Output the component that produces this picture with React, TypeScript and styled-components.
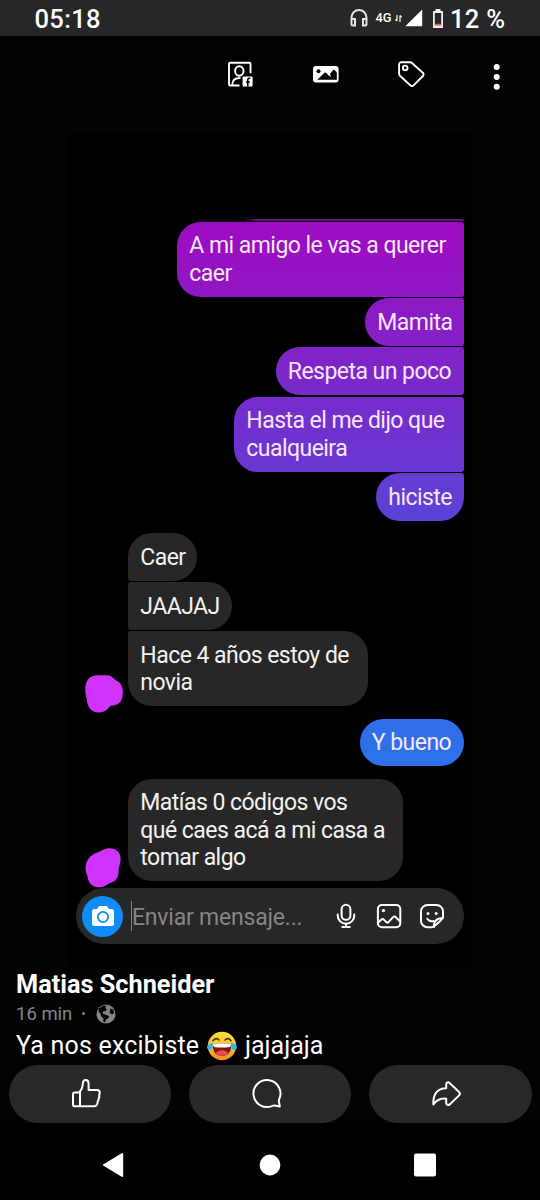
import React from "react";
import styled, { createGlobalStyle } from "styled-components";

const GlobalStyle = createGlobalStyle`
  * { box-sizing: border-box; }
  body { margin: 0; background: #000; }
  svg { display: block; flex: none; }
`;

const Screen = styled.main`
  width: 540px;
  height: 1200px;
  display: flex;
  flex-direction: column;
  background: #030303;
  color: #fff;
  font-family: Roboto, "Liberation Sans", sans-serif;
  overflow: hidden;
`;

const StatusBar = styled.header`
  height: 36px;
  flex: none;
  display: flex;
  align-items: center;
  padding: 0 35px 0 34.5px;
  background: #262729;
`;

const Clock = styled.span`
  font-size: 25.5px;
  font-weight: 500;
  line-height: 36px;
  letter-spacing: 0.35px;
  margin-right: auto;
  padding-top: 2px;
`;

const Network = styled.span`
  font-size: 12.8px;
  font-weight: 500;
  line-height: 36px;
  margin-left: 8px;
  width: 19.5px;
  white-space: nowrap;
`;

const Battery = styled(Clock)`
  margin: 0 0 0 6px;
  width: 55px;
  white-space: nowrap;
`;

const Toolbar = styled.nav`
  height: 98px;
  flex: none;
  display: flex;
  align-items: flex-start;
  padding: 23px 29px 0 226px;
`;

const ToolButton = styled.div<{ $width: number }>`
  width: ${(p) => p.$width}px;
  height: 32px;
  flex: none;
`;

const Photo = styled.section`
  width: 406px;
  height: 832px;
  flex: none;
  margin-left: 67px;
  padding: 85px 9px 0;
  display: flex;
  flex-direction: column;
  background: #000;
`;

const PreviousBubble = styled.div`
  width: 220px;
  height: 1.5px;
  flex: none;
  align-self: flex-end;
  margin-bottom: 1px;
  background: linear-gradient(90deg, transparent, #6f0c86 12px);
  border-radius: 2px 2px 0 0;
`;

const Thread = styled.div<{ $own?: boolean; $gap?: number }>`
  display: flex;
  flex-direction: column;
  align-items: ${(p) => (p.$own ? "flex-end" : "flex-start")};
  gap: 1.5px;
  margin-top: ${(p) => p.$gap ?? 0}px;
`;

const IncomingRow = styled.div<{ $gap: number }>`
  display: flex;
  align-items: flex-end;
  margin: ${(p) => p.$gap}px 0 0 9px;
`;

const AvatarSlot = styled.div<{ $drop: number }>`
  width: 43px;
  height: 40px;
  flex: none;
  margin-bottom: -${(p) => p.$drop}px;
`;

const Bubble = styled.div<{ $width: number; $fill?: string; $corners: string }>`
  width: ${(p) => p.$width}px;
  padding: 10.7px 0 9.55px 12.3px;
  border-radius: ${(p) => p.$corners};
  background: ${(p) => p.$fill ?? "#272727"};
  color: ${(p) => (p.$fill ? "#f8e6fb" : "#f2f2f2")};
  font-size: 23px;
  line-height: 27.45px;
  letter-spacing: -0.54px;
  white-space: pre;
`;

const Composer = styled.div`
  width: 388px;
  height: 56.5px;
  flex: none;
  margin-top: 6.7px;
  padding: 0 18px 0 6px;
  border-radius: 29px;
  display: flex;
  align-items: center;
  background: #272727;
`;

const Camera = styled.div`
  width: 41px;
  height: 41px;
  flex: none;
  border-radius: 50%;
  background: #0f8cf6;
  display: flex;
  align-items: center;
  justify-content: center;
`;

const Prompt = styled.div`
  height: 30px;
  width: 200px;
  margin-left: 8px;
  border-left: 1px solid #858585;
  font-size: 23px;
  line-height: 33px;
  letter-spacing: -0.2px;
  color: #858585;
  white-space: nowrap;
`;

const ComposerIcons = styled.div`
  display: flex;
  gap: 15px;
  margin-left: 2px;
`;

const Caption = styled.section`
  height: 99px;
  flex: none;
  padding: 4px 16px 0;
`;

const Author = styled.h1`
  margin: 0;
  font-size: 25.3px;
  font-weight: 700;
  line-height: 30px;
  white-space: nowrap;
`;

const Meta = styled.div`
  height: 26px;
  display: flex;
  align-items: center;
  gap: 10px;
  color: #85868a;
  font-size: 18.5px;
  line-height: 26px;
  padding-top: 1px;
`;

const Dot = styled.i`
  width: 3px;
  height: 3px;
  border-radius: 50%;
  background: #85868a;
`;

const PostText = styled.p`
  margin: 0;
  height: 39px;
  display: flex;
  align-items: center;
  font-size: 25px;
  line-height: 39px;
  white-space: nowrap;
`;

const PostPart = styled.span<{ $width: number; $track?: number; $lead?: number }>`
  width: ${(p) => p.$width}px;
  letter-spacing: ${(p) => p.$track ?? 0}px;
  margin-left: ${(p) => p.$lead ?? 0}px;
`;

const Actions = styled.div`
  flex: none;
  display: flex;
  gap: 17.5px;
  padding: 0 8.5px;
`;

const ActionButton = styled.div`
  flex: 1;
  height: 58px;
  padding-right: 7px;
  border-radius: 29px;
  background: #282828;
  display: flex;
  align-items: center;
  justify-content: center;
`;

const SystemNav = styled.footer`
  flex: 1;
  display: flex;
  justify-content: space-between;
  align-items: center;
  padding: 7px 103px 0 102px;
  background: #000;
`;

const Stroke = ({ size = 32, w = 2, children }: { size?: number; w?: number; children: React.ReactNode }) => (
  <svg width={size} height={size} viewBox={`0 0 ${size} ${size}`} fill="none" stroke="#fff" strokeWidth={w} strokeLinecap="round" strokeLinejoin="round">
    {children}
  </svg>
);

const LaughEmoji = () => (
  <svg width="30" height="30" viewBox="0 0 30 30">
    <defs>
      <linearGradient id="face" x1="0" y1="0" x2="0" y2="1">
        <stop offset="0" stopColor="#fde030" />
        <stop offset=".55" stopColor="#fbc02d" />
        <stop offset="1" stopColor="#f68b20" />
      </linearGradient>
    </defs>
    <circle cx="15" cy="15" r="14.2" fill="url(#face)" />
    <path d="M6 9.7Q9 5.9 12 9M18 9Q21 5.9 24 9.7" fill="none" stroke="#422b0d" strokeWidth="1.6" strokeLinecap="round" />
    <path d="M5.6 12.7Q15 11.6 24.4 12.7Q24.5 24.8 15 24.8Q5.5 24.8 5.6 12.7Z" fill="#7e1719" />
    <path d="M8.5 21.8Q15 16 21.5 21.8Q19 24.8 15 24.8T8.5 21.8Z" fill="#ed4c55" />
    <path d="M6 12.7Q15 11.6 24 12.7Q24.1 15.6 22.8 15.9Q15 17 7.2 15.9Q5.9 15.6 6 12.7Z" fill="#fff" />
    <path d="M6 12.2C3.3 12 .1 13.6.1 16.5c0 3 4.3 3.2 5.1.5.4-1.5.4-3 .8-4.8ZM24 12.2c2.7-.2 5.9 1.4 5.9 4.3 0 3-4.3 3.2-5.1.5-.4-1.5-.4-3-.8-4.8Z" fill="#29b6f6" />
  </svg>
);

const OPEN_TOP = "24px 3px 3px 24px";

export default function App() {
  return (
    <Screen>
      <GlobalStyle />
      <StatusBar>
        <Clock>05:18</Clock>
        <svg width="18" height="18" viewBox="0 0 18 18" fill="none" stroke="#e4e4e4" strokeWidth="2">
          <path d="M1.5 10V8.5a7.5 7.5 0 0 1 15 0V10M1.5 10H5v6.500H3A1.500 1.500 0 0 1 1.500 15ZM16.500 10H13v6.500h2a1.500 1.500 0 0 0 1.500-1.500Z" />
        </svg>
        <Network>4G</Network>
        <svg width="7" height="9" viewBox="0 0 7 9" fill="none" stroke="#fff" strokeWidth="1.2">
          <path d="M2 1v6M.3 5.3 2 7.2M5 8V1.5M6.8 3.3 5 1.4" />
        </svg>
        <svg width="18" height="18" viewBox="0 0 18 18" style={{ marginLeft: 3 }}>
          <path d="M17.2.5V17.2H.3Z" fill="#fff" />
        </svg>
        <svg width="12" height="19" viewBox="0 0 12 19" style={{ marginLeft: 9 }}>
          <path d="M3.5 0h5v2H11v17H1V2h2.5Z" fill="#f2ece8" />
          <path d="M2.8 4h6.4v11H2.8Z" fill="#262729" />
          <path d="M2.5 14.8h7v1.8h-7Z" fill="#e5603c" />
        </svg>
        <Battery>12 %</Battery>
      </StatusBar>

      <Toolbar>
        <ToolButton $width={84}>
          <Stroke w={1.9}>
            <path d="M12.8 26.5H4.3A1.3 1.3 0 0 1 3 25.2V5a1.3 1.3 0 0 1 1.3-1.3H23.2A1.3 1.3 0 0 1 24.5 5v8.5" />
            <ellipse cx="13.3" cy="12" rx="4.2" ry="4.8" />
            <path d="M6.2 26c0-4.8 2.4-7 7.5-7" />
            <rect x="16.6" y="17.6" width="10" height="10" rx="1" fill="#fff" stroke="none" />
            <path d="M24.3 19.2h-1c-1.2 0-1.5.7-1.5 1.8v6.5M20 23h3.9" stroke="#000" strokeWidth="1.6" strokeLinecap="butt" />
          </Stroke>
        </ToolButton>
        <ToolButton $width={85}>
          <Stroke>
            <rect x="3" y="7" width="25.6" height="16.5" rx="3" fill="#fff" stroke="none" />
            <circle cx="8.5" cy="12.2" r="2" fill="#000" stroke="none" />
            <path d="M7.3 20.7 14.5 13.8Q15.2 13.2 16 13.8L19 16.7 22.6 11.5Q23.8 10 25 11.4L26.8 13.5V20.7Z" fill="#000" stroke="none" />
            <path d="m18.6 15.1 1.8 1.8" strokeWidth="1.2" />
          </Stroke>
        </ToolButton>
        <ToolButton $width={95}>
          <Stroke w={1.9}>
            <path d="M6.2 3.3H15.3a3 3 0 0 1 2.1.9L28 13.8a2.2 2.2 0 0 1 .1 3.2L19 26.1a2.7 2.7 0 0 1-3.7 0L5.2 16.8a3 3 0 0 1-.9-2.1V5.2a1.9 1.9 0 0 1 1.9-1.9Z" transform="translate(-.2 0)" />
            <circle cx="10.2" cy="8.900" r="2.3" />
          </Stroke>
        </ToolButton>
        <svg width="14" height="32" viewBox="0 0 14 32" fill="#fff">
          <circle cx="6.7" cy="8.1" r="3" />
          <circle cx="6.7" cy="17.9" r="3" />
          <circle cx="6.7" cy="27.7" r="3" />
        </svg>
      </Toolbar>

      <Photo>
        <PreviousBubble />
        <Thread $own>
          <Bubble $width={287} $corners={OPEN_TOP} $fill="linear-gradient(#9d0bc0, #8f17c4)">{"A mi amigo le vas a querer\ncaer"}</Bubble>
          <Bubble $width={99} $corners={OPEN_TOP} $fill="linear-gradient(#8e19c4, #8421c7)">Mamita</Bubble>
          <Bubble $width={188.5} $corners={OPEN_TOP} $fill="linear-gradient(#8223c8, #782acb)">Respeta un poco</Bubble>
          <Bubble $width={230} $corners={OPEN_TOP} $fill="linear-gradient(#772bcc, #6738d2)">{"Hasta el me dijo que\ncualqueira"}</Bubble>
          <Bubble $width={88} $corners="24px 3px 24px 24px" $fill="linear-gradient(#663ad3, #5b43d8)">hiciste</Bubble>
        </Thread>
        <IncomingRow $gap={12}>
          <AvatarSlot $drop={7}>
            <svg width="40" height="40" viewBox="0.7 0 40 40">
              <path d="M1 18C.5 8 5 2.300 13 2.300H22C28 2.300 29 6 33 8.300 39 11 39.500 20 37.500 26 36 31 31 32.500 27 32.600 24 34 23 39.400 14.500 39.600 6 39.600 2.500 32 2.600 26 1.500 23 1.200 21 1 18Z" fill="#d033fb" />
            </svg>
          </AvatarSlot>
          <Thread>
            <Bubble $width={69} $corners="24px 24px 24px 3px">Caer</Bubble>
            <Bubble $width={104} $corners="3px 24px 24px 3px">JAAJAJ</Bubble>
            <Bubble $width={240} $corners="3px 24px 24px 24px">{"Hace 4 años estoy de\nnovia"}</Bubble>
          </Thread>
        </IncomingRow>
        <Thread $own $gap={12.3}>
          <Bubble $width={104.5} $corners="24px" $fill="linear-gradient(#316de8, #2b73e8)">Y bueno</Bubble>
        </Thread>
        <IncomingRow $gap={12.3}>
          <AvatarSlot $drop={6.5}>
            <svg width="40" height="40" viewBox="0.5 0 40 40">
              <path d="M1 20.500C1 13 5 7 13 4.500 17 3 20 .300 25 .300 33 .300 37 6 36 13 35.500 17 33.800 20 34 24 33.800 31 30 34 25.500 35 22 37 19 39.300 14 39.300 7 39 3.500 34 3 28 1.500 25 1 23 1 20.500Z" fill="#d033fb" />
            </svg>
          </AvatarSlot>
          <Bubble $width={275} $corners="24px">{"Matías 0 códigos vos\nqué caes acá a mi casa a\ntomar algo"}</Bubble>
        </IncomingRow>
        <Composer>
          <Camera>
            <svg width="24" height="22" viewBox="0 0 24 22">
              <path d="M8 1h8l2 3h2.5A2.5 2.5 0 0 1 23 6.500v12A2.500 2.500 0 0 1 20.500 21h-17A2.500 2.500 0 0 1 1 18.500v-12A2.500 2.500 0 0 1 3.500 4H6Z" fill="#fff" />
              <circle cx="12" cy="12" r="5.100" fill="#fff" stroke="#0f8cf6" strokeWidth="1.800" />
            </svg>
          </Camera>
          <Prompt>Enviar mensaje...</Prompt>
          <ComposerIcons>
            <Stroke size={28}>
              <rect x="9.600" y="2.800" width="8.800" height="15" rx="4.400" />
              <path d="M5.700 12.500v1a8.300 8.300 0 0 0 16.600 0v-1M14 21.800v3M10.300 25h7.400" />
            </Stroke>
            <Stroke size={28}>
              <rect x="2.900" y="3" width="22.400" height="22.200" rx="4" />
              <circle cx="8.400" cy="8.600" r="1.700" fill="#fff" stroke="none" />
              <path d="m3 20.800 3.500-3.300q1.200-1 2.300.1l2.700 2.700q1 .8 2-.2l4.600-5q1.300-1.200 2.600 0l4.300 4.300" />
            </Stroke>
            <Stroke size={28}>
              <path d="M9.500 3h9a6.500 6.500 0 0 1 6.500 6.500V15c0 2-9 10.200-11 10.200H9.500A6.500 6.500 0 0 1 3 18.700V9.500A6.500 6.500 0 0 1 9.500 3ZM16 25c-.5-5.500 2.500-9 9-9" />
              <circle cx="10" cy="11.500" r="1.500" fill="#fff" stroke="none" />
              <circle cx="18.200" cy="11.500" r="1.500" fill="#fff" stroke="none" />
              <path d="M9.300 16.800q2.500 3.300 6.500 2.200" />
            </Stroke>
          </ComposerIcons>
        </Composer>
      </Photo>

      <Caption>
        <Author>Matias Schneider</Author>
        <Meta>
          16 min
          <Dot />
          <svg width="20" height="20" viewBox="0 0 20 20" style={{ marginLeft: 1 }}>
            <circle cx="10" cy="10" r="9.500" fill="#85868a" />
            <path d="M2.500 4.700 7.300 1.500 10.500 2 9 4l2 1.300L9.500 7 7 7.500 6.500 9.500 9 10.500 13 12l-.5 2-2.500 1.500-.8 2.700-2-.7.200-3L5 12 4.500 9.500 2.600 7.800ZM14 4.500l3.200 1 .8 3.500-2 1.500-2.500-2 .8-1.500Z" fill="#020202" />
          </svg>
        </Meta>
        <PostText>
          <PostPart $width={190.500} $track={0.2}>Ya nos excibiste</PostPart>
          <LaughEmoji />
          <PostPart $width={90} $lead={8.500}>jajajaja</PostPart>
        </PostText>
      </Caption>

      <Actions>
        <ActionButton>
          <Stroke>
            <path d="M3 16.200a1.800 1.800 0 0 1 1.800-1.800H9q3.600-3 3.900-9.300Q13.200 2 15.700 2q2.800 0 2.900 3.500V12h8.400q2.800.1 2.800 2.600 0 1.500-.6 2.300.6 1.500-.5 3.300.3 1.800-1 3.200-.1 4.400-3.300 4.800H4.800a1.800 1.800 0 0 1-1.800-1.800ZM10 14v14.200" />
          </Stroke>
        </ActionButton>
        <ActionButton>
          <Stroke>
            <path d="M28 21.600A13.500 13.500 0 1 0 21.500 27.800q1-.5 2-.3l5.300 1-.8-4.500q-.3-1.200 0-2.400Z" />
          </Stroke>
        </ActionButton>
        <ActionButton>
          <Stroke>
            <path d="M3.200 26.500C2.500 16 7 10.500 16 10.300V6.500q.3-2.800 2.800-2L28.900 14q1.600 1.800 0 3.400L19.500 26.500q-3 1.500-3.500-1.500v-4.300C10.500 20 6.500 22 3.200 26.500Z" transform="translate(-.8 0)" />
          </Stroke>
        </ActionButton>
      </Actions>

      <SystemNav>
        <svg width="22" height="26" viewBox="0 0 22 26">
          <path d="M20.200 2v22L2 13Z" fill="#fff" stroke="#fff" strokeWidth="2" strokeLinejoin="round" />
        </svg>
        <svg width="24" height="22" viewBox="0 0 24 22">
          <circle cx="13" cy="11" r="10.400" fill="#fff" />
        </svg>
        <svg width="24" height="24" viewBox="0 0 24 24">
          <rect x="1" y=".5" width="22" height="23" rx="2" fill="#fff" />
        </svg>
      </SystemNav>
    </Screen>
  );
}
